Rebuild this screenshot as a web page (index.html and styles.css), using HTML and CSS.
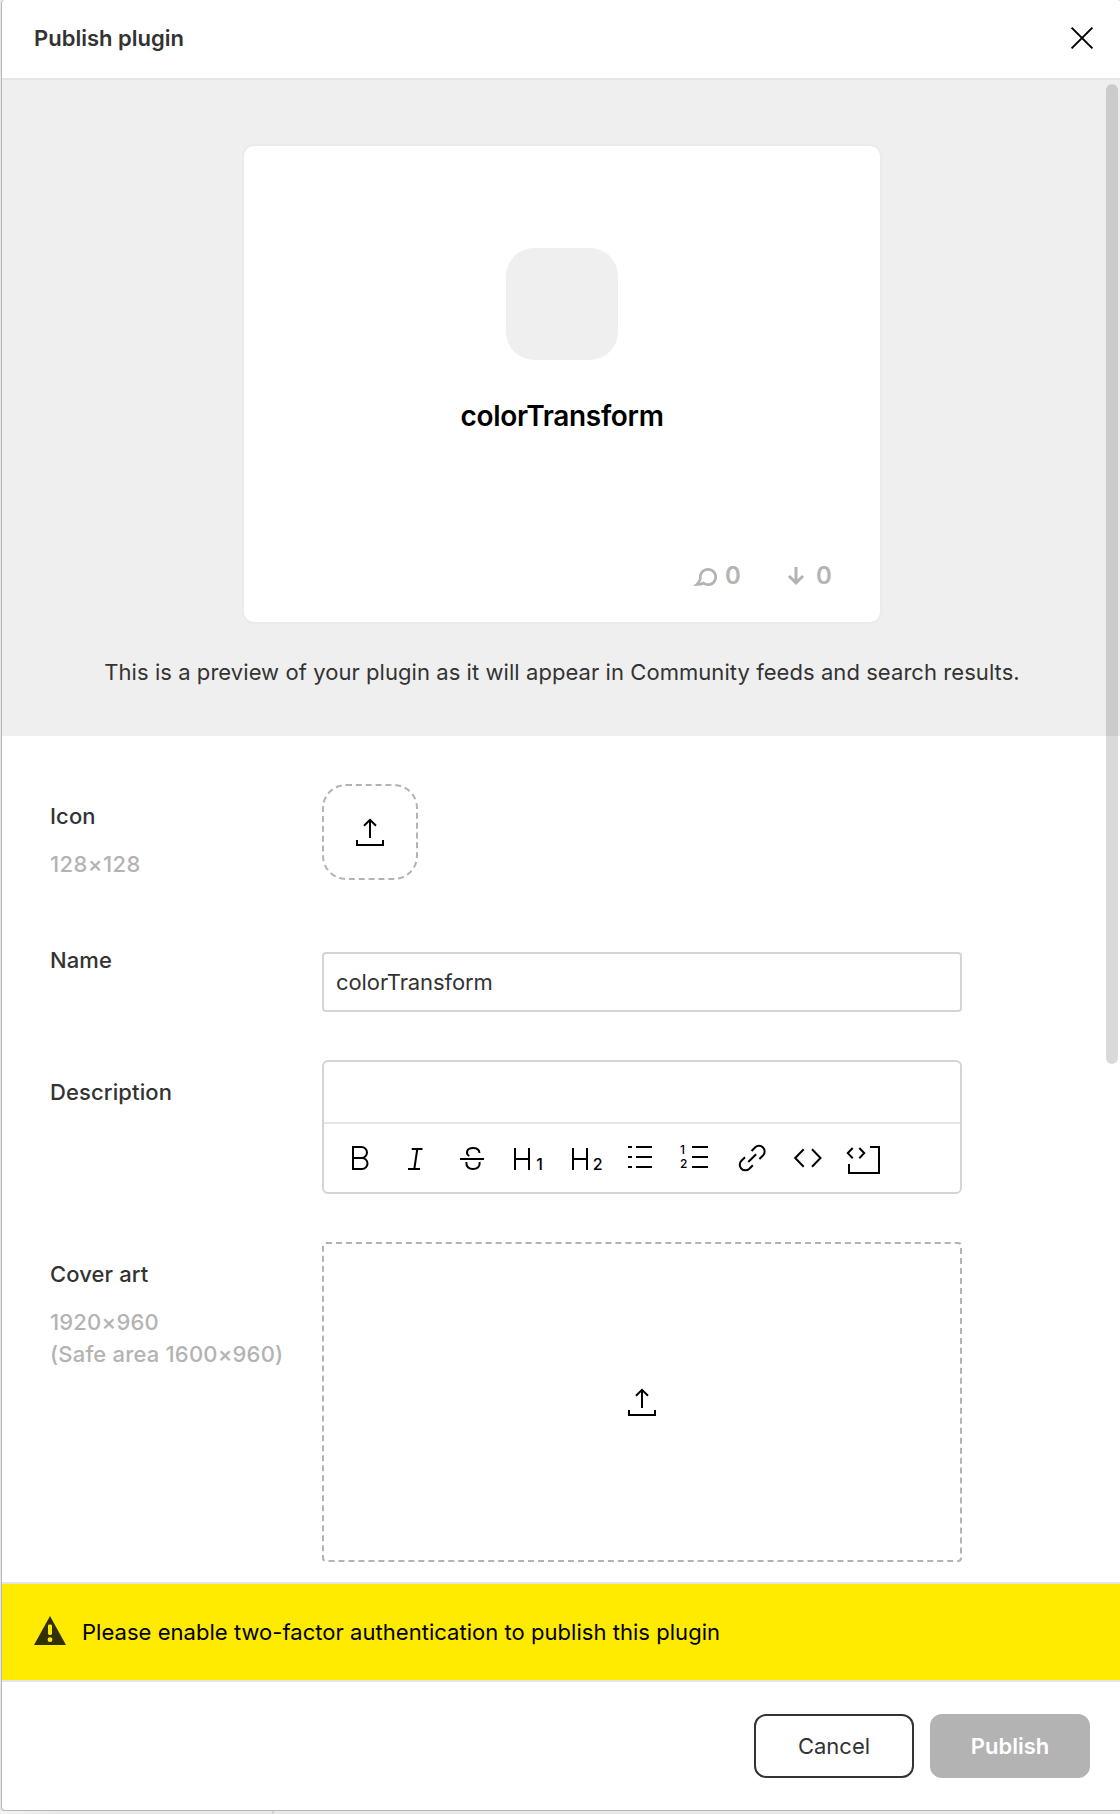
FILE: index.html
```html
<!DOCTYPE html>
<html lang="en">
<head>
<meta charset="utf-8">
<title>Publish plugin</title>
<link rel="stylesheet" href="styles.css">
</head>
<body>
<div class="backdrop"></div>
<main class="modal">
  <header class="header">
    <h1 class="title">Publish plugin</h1>
    <svg class="close" viewBox="0 0 24 24" fill="none" stroke="#000" stroke-width="2"><path d="M1.6 1.6 22.4 22.4M22.4 1.6 1.6 22.4"/></svg>
  </header>

  <div class="body">
    <section class="preview">
      <div class="card">
        <div class="card-icon"></div>
        <div class="card-name">colorTransform</div>
        <div class="stats">
          <svg class="bubble" viewBox="0 0 24 20" fill="none" stroke="#b3b3b3" stroke-width="2.7"><path d="M7.4 11.5A7.7 7.7 0 1 1 10.4 16.2C8.6 17.2 6.4 17.4 3.8 17.5 5.8 15.8 6.8 14 7.4 11.5Z"/></svg>
          <span class="count">0</span>
          <svg class="arrow" viewBox="0 0 18 20" fill="none" stroke="#b3b3b3" stroke-width="3"><path d="M9 1V17M2 10 9 17 16 10"/></svg>
          <span class="count">0</span>
        </div>
      </div>
      <p class="caption">This is a preview of your plugin as it will appear in Community feeds and search results.</p>
    </section>

    <section class="form">
      <div class="label label-icon"><div>Icon</div><div class="hint hint-icon">128×128</div></div>
      <div class="drop drop-icon">
        <svg class="upload" viewBox="0 0 32 32" fill="none" stroke="#000" stroke-width="2"><path d="M16 22V4M10 9.8 16 3.8 22 9.8M3 24V29H29V24"/></svg>
      </div>

      <div class="label label-name">Name</div>
      <div class="input">colorTransform</div>

      <div class="label label-desc">Description</div>
      <div class="editor">
        <div class="editor-text"></div>
        <div class="toolbar">
          <svg class="tool" viewBox="0 0 56 40"><path d="M21 9H29.5A5.5 5.5 0 0 1 29.5 20H21M29.5 20H30A5.5 5.5 0 0 1 30 31H21V8"/></svg>
          <svg class="tool" viewBox="0 0 56 40"><path d="M23.7 11H34.5M20 31H32M29.3 11 26.3 31"/></svg>
          <svg class="tool" viewBox="0 0 56 40"><path d="M16 21H40M25.3 18C21.3 15.5 22.5 10 29 10 32.6 10 35.2 11.8 35.5 15M22.3 24C22.3 28.5 25 31 29 31 33.3 31 36.3 28.5 35.6 24"/></svg>
          <svg class="tool" viewBox="0 0 56 40"><path d="M15 10V32M29 10V32M15 21H29"/><text x="36.3" y="32" font-size="16">1</text></svg>
          <svg class="tool" viewBox="0 0 56 40"><path d="M17 10V32M31 10V32M17 21H31"/><text x="36.8" y="32" font-size="16">2</text></svg>
          <svg class="tool" viewBox="0 0 56 40"><path d="M16 9H20M24 9H40M16 19H20M24 19H40M16 29H20M24 29H40"/></svg>
          <svg class="tool" viewBox="0 0 56 40"><path d="M24 9H40M24 19H40M24 29H40"/><text x="12" y="16" font-size="12">1</text><text x="12" y="30.3" font-size="12">2</text></svg>
          <svg class="tool" viewBox="0 0 56 40"><path d="M27.6 13 31 9.5A5.6 5.6 0 0 1 39 17.5L35.4 21M24.3 24 32.1 16.2M28.8 27.2 25.4 30.7A5.6 5.6 0 0 1 17.4 22.7L21 19.2"/></svg>
          <svg class="tool" viewBox="0 0 56 40"><path d="M23.7 11.3 15.2 20 23.7 28.7M32 11.3 40.5 20 32 28.7"/></svg>
          <svg class="tool" viewBox="0 0 56 40"><path d="M16.7 10 11.8 15.1 16.7 20.2M23.3 10 28.2 15.1 23.3 20.2M34 9H43V35H13V26"/></svg>
        </div>
      </div>

      <div class="label label-cover"><div>Cover art</div><div class="hint">1920×960<br>(Safe area 1600×960)</div></div>
      <div class="drop drop-cover">
        <svg class="upload" viewBox="0 0 32 32" fill="none" stroke="#000" stroke-width="2"><path d="M16 22V4M10 9.8 16 3.8 22 9.8M3 24V29H29V24"/></svg>
      </div>
    </section>
    <div class="scrollbar"></div>
  </div>

  <div class="warning">
    <svg class="warning-icon" viewBox="0 0 32 29"><path fill="#333000" d="M16 0 32 29H0Z"/><rect x="14" y="8.5" width="4" height="10.5" rx="1.4" fill="#ffeb00"/><circle cx="16" cy="23.7" r="2.4" fill="#ffeb00"/></svg>
    <span>Please enable two-factor authentication to publish this plugin</span>
  </div>

  <footer class="footer">
    <button class="btn btn-cancel">Cancel</button>
    <button class="btn btn-publish">Publish</button>
  </footer>
</main>
</body>
</html>
```
FILE: styles.css
```css
* { box-sizing: border-box; }
html, body { margin: 0; height: 1814px; overflow: hidden; }
body {
  position: relative;
  background: #e9e9e9;
  font-family: Inter, "Liberation Sans", sans-serif;
  font-size: 22px;
  line-height: 32px;
  letter-spacing: 0.11px;
  color: #333;
}
.backdrop {
  position: absolute;
  left: 0;
  bottom: 0;
  width: 274px;
  height: 3px;
  border-right: 2px solid #d4d4d4;
  background: linear-gradient(90deg, #f4f4f4, #e9e9e9 60px);
}
.modal {
  position: relative;
  display: flex;
  flex-direction: column;
  margin-left: 1px;
  width: 1121px;
  height: 1811px;
  border: 1px solid #b5b5b5;
  border-top: 0;
  border-radius: 4px;
  background: #fff;
  overflow: hidden;
}
.header {
  flex: none;
  display: flex;
  justify-content: space-between;
  height: 80px;
  padding: 22px 27px 0 32px;
  border-bottom: 2px solid #e5e5e5;
}
.title { margin: 0; font-size: 22px; font-weight: 600; line-height: 32px; letter-spacing: 0; }
.close { width: 24px; height: 24px; margin-top: 4px; }
.body { position: relative; flex: none; height: 1502px; }
.preview {
  display: flex;
  flex-direction: column;
  align-items: center;
  height: 656px;
  padding: 64px 0 0 1px;
  background: #efefef;
}
.card {
  display: flex;
  flex-direction: column;
  align-items: center;
  width: 640px;
  height: 480px;
  padding-top: 102px;
  border: 2px solid #ebebeb;
  border-radius: 12px;
  background: #fff;
}
.card-icon { width: 112px; height: 112px; border-radius: 28px; background: #efefef; }
.card-name {
  margin-top: 36px;
  font-size: 28px;
  font-weight: 600;
  line-height: 40px;
  letter-spacing: -0.31px;
  color: #000;
}
.stats {
  display: flex;
  align-items: center;
  align-self: stretch;
  justify-content: flex-end;
  margin-top: 124px;
  padding-right: 48px;
  font-size: 24px;
  font-weight: 600;
  color: #b3b3b3;
}
.bubble { width: 24px; height: 20px; margin: 2px 8px 0 0; }
.arrow { width: 18px; height: 20px; margin: 0 11px 0 46px; }
.caption { margin: 32px 0 0; letter-spacing: 0.06px; }
.form {
  display: grid;
  grid-template-columns: 272px 640px;
  grid-template-rows: 168px 108px 182px 320px;
  align-items: start;
  padding: 48px 0 0 48px;
}
.label { font-weight: 500; }
.label-icon, .label-desc, .label-cover { padding-top: 16px; }
.label-name { margin-top: -8px; }
.hint { margin-top: 16px; color: #b3b3b3; white-space: nowrap; letter-spacing: 0.19px; }
.hint-icon { letter-spacing: 0.44px; }
.drop { display: grid; place-items: center; border: 2px dashed #b3b3b3; }
.drop-icon { width: 96px; height: 96px; border-radius: 24px; }
.drop-cover { height: 320px; border-radius: 4px; }
.upload { width: 32px; height: 32px; }
.input {
  height: 60px;
  padding: 12px;
  border: 2px solid #d4d4d4;
  border-radius: 4px;
  letter-spacing: -0.1px;
}
.editor { height: 134px; border: 2px solid #d4d4d4; border-radius: 6px; }
.editor-text { height: 62px; border-bottom: 2px solid #e5e5e5; }
.toolbar { display: flex; padding: 14px 0 0 8px; }
.tool { width: 56px; height: 40px; fill: none; stroke: #000; stroke-width: 2; }
.tool text { fill: #000; stroke: none; font-weight: 500; letter-spacing: 0; }
.scrollbar {
  position: absolute;
  left: 1104px;
  top: 4px;
  width: 12px;
  height: 980px;
  border-radius: 6px;
  background: rgba(0, 0, 0, 0.15);
}
.warning {
  flex: none;
  display: flex;
  align-items: center;
  gap: 16px;
  height: 100px;
  padding-left: 32px;
  border: solid #e5e5e5;
  border-width: 2px 0;
  background: #ffeb00;
  color: #000;
  letter-spacing: 0.035px;
}
.warning-icon { width: 32px; height: 29px; margin-top: -3px; }
.footer { display: flex; gap: 16px; justify-content: flex-end; padding: 32px 31px 0 0; }
.btn {
  width: 160px;
  height: 64px;
  padding: 0;
  border: 2px solid #333;
  border-radius: 12px;
  background: #fff;
  color: #333;
  font: inherit;
  letter-spacing: 0;
}
.btn-publish { border-color: #b3b3b3; background: #b3b3b3; color: #fff; font-weight: 600; }
```
